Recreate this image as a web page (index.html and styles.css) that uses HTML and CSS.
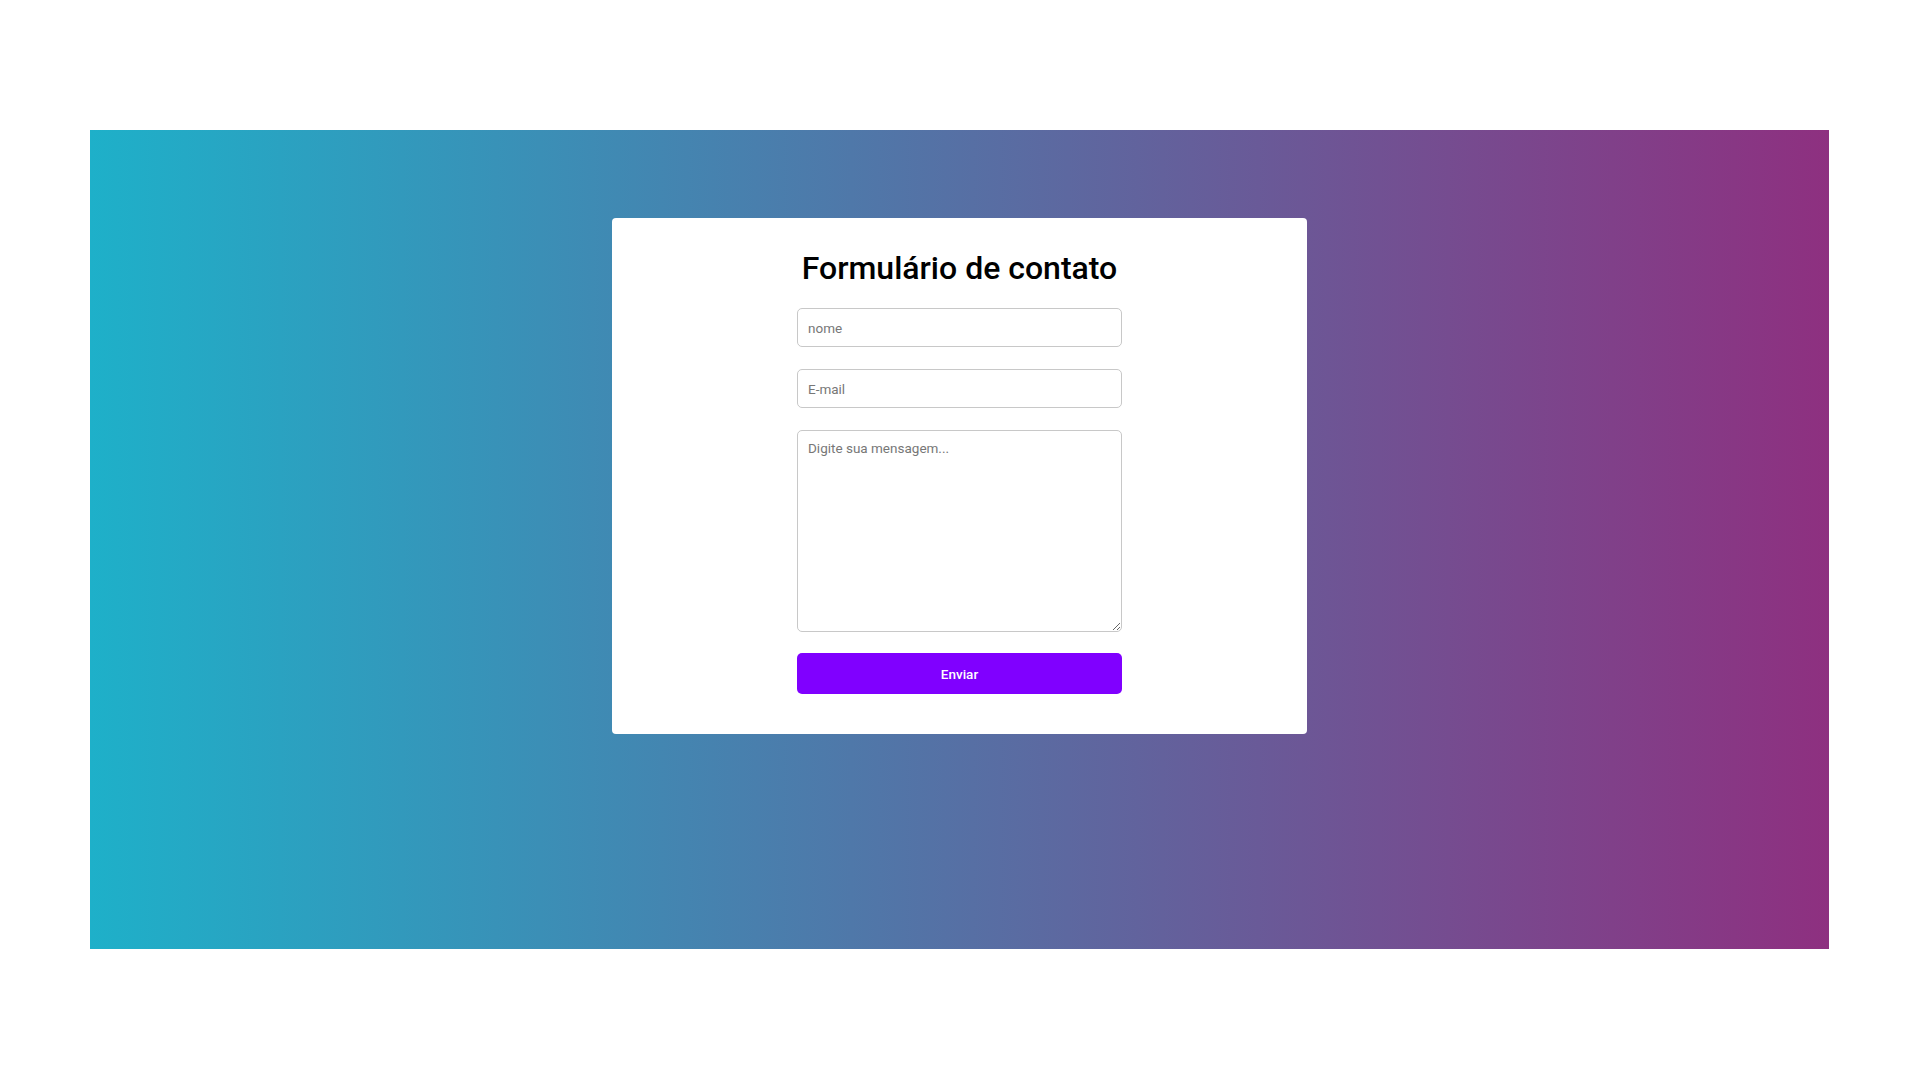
FILE: index.html
```html
<!DOCTYPE html>
<html lang="pt-BR">
<head>
<meta charset="utf-8">
<title>Formulário de contato</title>
<link rel="stylesheet" href="styles.css">
</head>
<body>
<main class="stage">
  <form class="card">
    <h1 class="title">Formulário de contato</h1>
    <input class="field" type="text" placeholder="nome">
    <input class="field" type="email" placeholder="E-mail">
    <textarea class="field area" placeholder="Digite sua mensagem..."></textarea>
    <button class="send" type="button">Enviar</button>
  </form>
</main>
</body>
</html>
```
FILE: styles.css
```css
* { box-sizing: border-box; }
html, body { margin: 0; padding: 0; background: #fff; }
body { font-family: Roboto, "Liberation Sans", sans-serif; }
.stage {
  margin: 130px 0 0 90px;
  width: 1739px;
  height: 819px;
  background: linear-gradient(to right, #1eb0c9, #8e3080);
  display: flex;
  justify-content: center;
  align-items: flex-start;
  padding-top: 88px;
}
.card {
  width: 695px;
  background: #fff;
  border-radius: 4px;
  padding: 34px 0 40px;
  display: flex;
  flex-direction: column;
  align-items: center;
}
.title {
  margin: 0 0 24px;
  font-size: 32px;
  line-height: 32px;
  font-weight: 500;
  color: #000;
}
.field {
  width: 325px;
  height: 39px;
  border: 1px solid #c8c8c8;
  border-radius: 5px;
  padding: 0 10px;
  font-family: Roboto, "Liberation Sans", sans-serif;
  font-size: 13.5px;
  color: #333;
  margin-bottom: 22px;
  background: #fff;
}
.field::placeholder { color: #777; }
.area {
  height: 202px;
  padding: 9px 10px;
  margin-bottom: 21px;
  resize: both;
}
.send {
  width: 325px;
  height: 41px;
  border: none;
  border-radius: 5px;
  background: #8000ff;
  color: #fff;
  font-family: Roboto, "Liberation Sans", sans-serif;
  font-size: 13.5px;
  font-weight: 500;
  cursor: pointer;
}
```
